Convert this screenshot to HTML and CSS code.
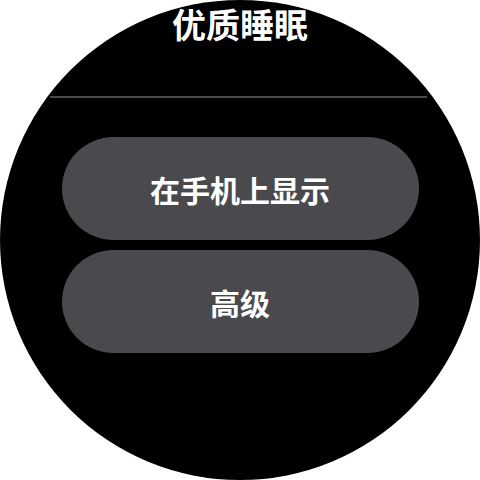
FILE: index.html
```html
<!DOCTYPE html>
<html lang="zh">
<head>
    <meta charset="UTF-8">
    <title>优质睡眠</title>
    <link rel="stylesheet" href="styles.css">
</head>
<body>
    <div class="watch">
        <h1 class="title">优质睡眠</h1>
        <div class="divider"></div>

        <div class="menu">
            <button class="pill">在手机上显示</button>
            <button class="pill">高级</button>
        </div>
    </div>
</body>
</html>
```

FILE: styles.css
```css
body {
    margin: 0;
    background-color: #ffffff;
    font-family: "Noto Sans CJK SC", "Noto Sans", sans-serif;
}
.watch {
    width: 480px;
    height: 480px;
    border-radius: 50%;
    background-color: #000000;
    overflow: hidden;
    display: flex;
    flex-direction: column;
    align-items: center;
}
.title {
    margin: 0;
    height: 48px;
    line-height: 48px;
    font-size: 34px;
    font-weight: bold;
    color: #ffffff;
}
.divider {
    width: 377px;
    height: 2px;
    margin-top: 48px;
    margin-left: -3px;
    background-color: #4a4a4a;
}
.menu {
    display: flex;
    flex-direction: column;
    gap: 10px;
    margin-top: 39px;
}
.pill {
    width: 357px;
    height: 103px;
    border: none;
    border-radius: 52px;
    background-color: #4a494e;
    color: #ffffff;
    font-family: inherit;
    font-size: 30px;
    font-weight: bold;
    cursor: pointer;
}
```
